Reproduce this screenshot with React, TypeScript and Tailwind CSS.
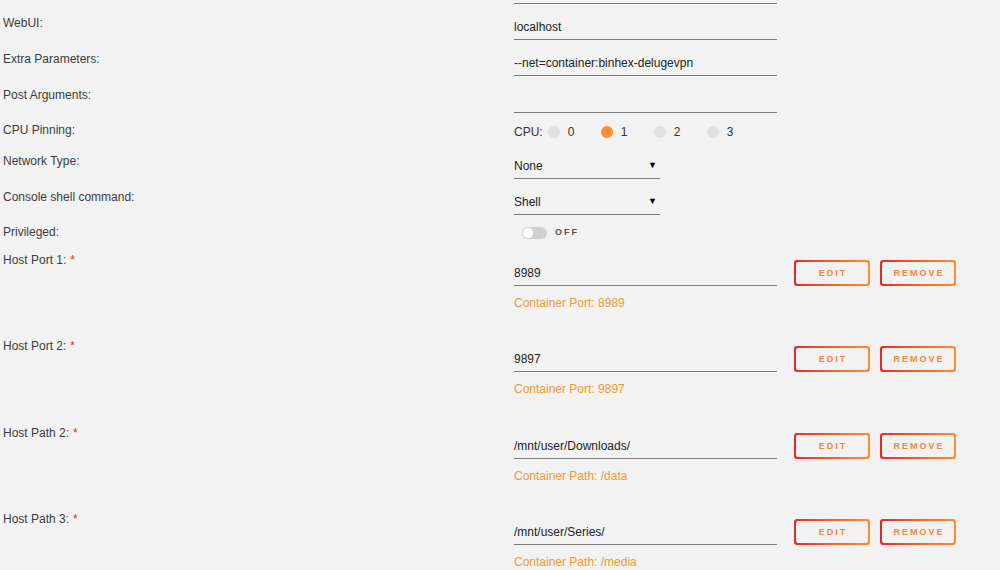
import React from "react";

const font = { fontFamily: '"Liberation Sans", Arial, sans-serif' };

function Label({ text, required, className }: { text: string; required?: boolean; className: string }) {
  return (
    <div className={`w-[514px] shrink-0 pl-[3px] text-[12px] leading-4 text-[#3c3c3c] ${className}`}>
      {text}
      {required && <span className="ml-1 text-[#e22828]">*</span>}
    </div>
  );
}

function TextInput({ value, className = "" }: { value: string; className?: string }) {
  return (
    <div className={`flex h-[26px] w-[263px] items-center border-b border-[#7a7a7a] text-[12px] text-[#222] ${className}`}>
      {value}
    </div>
  );
}

function Select({ value }: { value: string }) {
  return (
    <div className="mt-[10px] flex h-[26px] w-[146px] items-center justify-between border-b border-[#7a7a7a] pr-[3px] text-[12px] text-[#222]">
      <span>{value}</span>
      <span className="text-[9px] text-black">▼</span>
    </div>
  );
}

function GradientButton({ label }: { label: string }) {
  return (
    <div className="rounded-[3px] bg-gradient-to-r from-[#e22828] to-[#ff8c2f] p-[2px]">
      <div className="flex h-[22px] w-[72px] items-center justify-center rounded-[2px] bg-[#f2f2f2] pl-[2px] pt-px text-[9px] font-bold tracking-[2px] text-[#f9843a]">
        {label}
      </div>
    </div>
  );
}

const cpus = [0, 1, 2, 3];

const mappings = [
  { label: "Host Port 1:", value: "8989", note: "Container Port: 8989", h: "h-[86px]" },
  { label: "Host Port 2:", value: "9897", note: "Container Port: 9897", h: "h-[87px]" },
  { label: "Host Path 2:", value: "/mnt/user/Downloads/", note: "Container Path: /data", h: "h-[86px]" },
  { label: "Host Path 3:", value: "/mnt/user/Series/", note: "Container Path: /media", h: "h-[86px]" },
];

export default function App() {
  return (
    <div className="h-[570px] w-[1000px] overflow-hidden bg-[#f2f2f2]" style={font}>
      {/* previous field underline */}
      <div className="ml-[514px] h-[4px] w-[263px] border-b border-[#7a7a7a]" />

      {/* Text fields */}
      <div className="flex h-[36px] items-start">
        <Label text="WebUI:" className="mt-[11px]" />
        <TextInput value="localhost" className="mt-[10px]" />
      </div>
      <div className="flex h-[36px] items-start">
        <Label text="Extra Parameters:" className="mt-[11px]" />
        <TextInput value="--net=container:binhex-delugevpn" className="mt-[10px]" />
      </div>
      <div className="flex h-[37px] items-start">
        <Label text="Post Arguments:" className="mt-[11px]" />
        <TextInput value="" className="mt-[11px]" />
      </div>

      {/* CPU pinning */}
      <div className="flex h-[30px] items-start">
        <Label text="CPU Pinning:" className="mt-[9px]" />
        <div className="mt-[11px] flex items-center text-[12px] leading-4 text-[#333]">
          <span className="mr-[5px]">CPU:</span>
          {cpus.map((c) => (
            <div key={c} className="flex w-[53px] items-center">
              <span className={`h-[12px] w-[12px] rounded-full ${c === 1 ? "bg-[#ff8c2f]" : "bg-[#e1e1e1]"}`} />
              <span className="ml-[8px]">{c}</span>
            </div>
          ))}
        </div>
      </div>

      {/* Selects */}
      <div className="flex h-[36px] items-start">
        <Label text="Network Type:" className="mt-[10px]" />
        <Select value="None" />
      </div>
      <div className="flex h-[36px] items-start">
        <Label text="Console shell command:" className="mt-[10px]" />
        <Select value="Shell" />
      </div>

      {/* Privileged */}
      <div className="flex h-[30px] items-start">
        <Label text="Privileged:" className="mt-[9px]" />
        <div className="mt-[11px] flex items-center">
          <div className="ml-[8px] flex h-[12px] w-[25px] items-center rounded-full bg-[#cfcfcf]">
            <span className="h-[12px] w-[12px] rounded-full border border-[#d6d6d6] bg-white" />
          </div>
          <span className="ml-[8px] text-[9px] font-bold tracking-[2px] text-[#555]">OFF</span>
        </div>
      </div>

      {/* Port / path mappings */}
      {mappings.map((m) => (
        <div key={m.label} className={`flex items-start ${m.h}`}>
          <Label text={m.label} required className="mt-[7px]" />
          <div className="mt-[15px] flex flex-col">
            <div className="flex items-start">
              <TextInput value={m.value} />
              <div className="ml-[17px] flex gap-[10px]">
                <GradientButton label="EDIT" />
                <GradientButton label="REMOVE" />
              </div>
            </div>
            <div className="mt-[9px] text-[12px] leading-4 text-[#ee9a2f]">{m.note}</div>
          </div>
        </div>
      ))}
    </div>
  );
}
